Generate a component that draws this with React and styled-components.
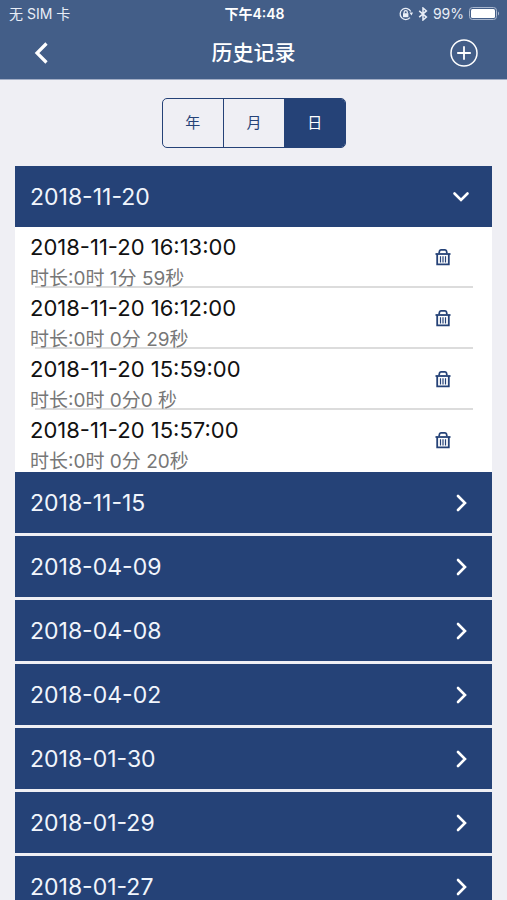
import React, { useState } from "react";
import styled, { createGlobalStyle } from "styled-components";

const GlobalStyle = createGlobalStyle`
    * {
        box-sizing: border-box;
    }
    body {
        margin: 0;
        font-family: Inter, "Noto Sans CJK SC", sans-serif;
    }
    button {
        margin: 0;
        padding: 0;
        border: none;
        background: none;
        color: inherit;
        font: inherit;
        cursor: pointer;
    }
`

const Page = styled.div`
    display: flex;
    flex-direction: column;
    height: 100vh;
    background: #efeff4;
`

const TopArea = styled.header`
    flex: none;
    background: #435e88;
    color: #fff;
    border-bottom: 1px solid #a3aec6;
`

const StatusBar = styled.div`
    display: grid;
    grid-template-columns: 1fr auto 1fr;
    align-items: center;
    height: 28px;
    padding: 0 7px 0 9px;
    font-size: 14px;
    line-height: 20px;
    color: #e9eef7;
`

const StatusTime = styled.span`
    font-weight: 600;
    color: #fff;
`

const StatusIcons = styled.div`
    display: flex;
    justify-content: flex-end;
    align-items: center;
    gap: 5px;
`

const NavBar = styled.nav`
    display: grid;
    grid-template-columns: 1fr auto 1fr;
    align-items: center;
    height: 51px;
    padding: 0 28px 2px;
`

const Title = styled.h1`
    margin: 0;
    font-size: 21px;
    line-height: 32px;
    font-weight: 500;
`

const NavButton = styled.button`
    display: flex;
    justify-self: ${props => props.$side};
`

const Content = styled.main`
    flex: 1;
    min-height: 0;
    overflow-y: auto;
    scrollbar-width: none;
    padding: 18px 15px 0;
`

const Segment = styled.div`
    display: grid;
    grid-template-columns: repeat(3, 1fr);
    width: 184px;
    height: 50px;
    margin: 0 auto 18px;
    border: 1px solid #254277;
    border-radius: 5px;
    overflow: hidden;
`

const SegmentButton = styled.button`
    font-size: 15px;
    line-height: 20px;
    color: ${props => (props.$active ? "#fff" : "#254277")};
    background: ${props => (props.$active ? "#254277" : "transparent")};
    & + & {
        border-left: 1px solid #254277;
    }
`

const GroupHeader = styled.button`
    display: flex;
    justify-content: space-between;
    align-items: center;
    width: 100%;
    height: 61px;
    margin-bottom: ${props => (props.$open ? "0" : "3px")};
    padding: 0 20px 0 15px;
    background: #254277;
    color: #f1f5fc;
    font-size: 23px;
    line-height: 24px;
`

const GroupSection = styled.section`
    display: flex;
    flex-direction: column;
`

const RecordList = styled.ul`
    margin: 0;
    padding: 0 19px 1px 15px;
    list-style: none;
    background: #fff;
`

const Record = styled.li`
    display: flex;
    justify-content: space-between;
    align-items: flex-start;
    height: 61px;
    padding: 4px 22px 0 0;
    background: linear-gradient(#dcdcdc, #dcdcdc) 5px 100% / 100% 2px no-repeat;
    &:last-child {
        background: none;
    }
`

const RecordTime = styled.div`
    font-size: 22px;
    line-height: 32px;
    color: #111;
`

const RecordLength = styled.div`
    font-size: 19px;
    line-height: 32px;
    color: #777;
`

const DeleteButton = styled.button`
    display: flex;
    padding-top: 17px;
`

const days = [
    {
        date: "2018-11-20",
        records: [
            { time: "2018-11-20 16:13:00", length: "时长:0时 1分 59秒" },
            { time: "2018-11-20 16:12:00", length: "时长:0时 0分 29秒" },
            { time: "2018-11-20 15:59:00", length: "时长:0时 0分0 秒" },
            { time: "2018-11-20 15:57:00", length: "时长:0时 0分 20秒" },
        ],
    },
    { date: "2018-11-15", records: [] },
    { date: "2018-04-09", records: [] },
    { date: "2018-04-08", records: [] },
    { date: "2018-04-02", records: [] },
    { date: "2018-01-30", records: [] },
    { date: "2018-01-29", records: [] },
    { date: "2018-01-27", records: [] },
];

const LockIcon = () => (
    <svg width="14" height="14" viewBox="0 0 14 14" fill="none" stroke="#e9eef7" strokeWidth="1.3">
        <path d="M11.8 4.5A5.6 5.6 0 1 0 11 10.6"/>
        <path d="M10.4 5.6h3.6l-1.5 3z" fill="#e9eef7" stroke="none"/>
        <rect x="4" y="6.2" width="5.4" height="4" fill="#e9eef7" stroke="none"/>
        <path d="M5.1 6.4V5.2a1.6 1.6 0 0 1 3.2 0v1.2"/>
    </svg>
);

const BluetoothIcon = () => (
    <svg width="10" height="14" viewBox="0 0 10 14" fill="none" stroke="#e9eef7" strokeWidth="1.5">
        <path d="M1.2 3.9l7.2 6.2L5 13V1l3.4 2.9-7.2 6.2"/>
    </svg>
);

const BatteryIcon = () => (
    <svg width="31" height="14" viewBox="0 0 31 14">
        <rect x="0.5" y="0.5" width="27" height="12" rx="3" fill="none" stroke="#a9b7ce"/>
        <rect x="2" y="2" width="24" height="9" rx="1.5" fill="#fff"/>
        <path d="M29 4.5c1.4.5 1.4 3.5 0 4z" fill="#a9b7ce"/>
    </svg>
);

const BackIcon = () => (
    <svg width="24" height="24" viewBox="0 0 24 24" fill="none" stroke="#fff" strokeWidth="3.2">
        <path d="M18.5 2.5L9 12l9.5 9.5"/>
    </svg>
);

const PlusIcon = () => (
    <svg width="30" height="30" viewBox="0 0 30 30" fill="none" stroke="#fff" strokeWidth="1.5">
        <circle cx="15" cy="15" r="13"/>
        <path d="M15 8.200v13.600M8.200 15h13.600" strokeWidth="1.8"/>
    </svg>
);

const ChevronIcon = ({ open }) => (
    <svg width="22" height="22" viewBox="0 0 22 22" fill="none" stroke="#fff" strokeWidth="2.6" strokeLinecap="round">
        <path d={open ? "M4.5 7.5L11 14l6.5-6.5" : "M8 4l7 7-7 7"}/>
    </svg>
);

const TrashIcon = () => (
    <svg width="16" height="18" viewBox="0 0 16 18" fill="none" stroke="#254277">
        <path d="M4 5.500l.6-2.700Q4.900 1.800 6 1.800h4q1.100 0 1.400 1l.6 2.700" strokeWidth="1.700"/>
        <path d="M0.500 6h15" strokeWidth="1.800"/>
        <path d="M2.200 6v10.300h11.600V6" strokeWidth="1.800"/>
        <path d="M5.500 8.200v6.200M8 8.200v6.200M10.500 8.200v6.200" strokeWidth="1.200"/>
    </svg>
);

const App = () => {
    const [unit, setUnit] = useState("日");
    const [openDate, setOpenDate] = useState("2018-11-20");

    return (
        <Page>
            <GlobalStyle/>
            <TopArea>
                <StatusBar>
                    <span>无 SIM 卡</span>
                    <StatusTime>下午4:48</StatusTime>
                    <StatusIcons>
                        <LockIcon/>
                        <BluetoothIcon/>
                        <span>99%</span>
                        <BatteryIcon/>
                    </StatusIcons>
                </StatusBar>
                <NavBar>
                    <NavButton $side="start" aria-label="返回"><BackIcon/></NavButton>
                    <Title>历史记录</Title>
                    <NavButton $side="end" aria-label="添加"><PlusIcon/></NavButton>
                </NavBar>
            </TopArea>
            <Content>
                <Segment>
                    {["年", "月", "日"].map(name => (
                        <SegmentButton key={name} $active={name === unit} onClick={() => setUnit(name)}>
                            {name}
                        </SegmentButton>
                    ))}
                </Segment>
                {days.map(day => {
                    const open = day.date === openDate && day.records.length > 0;
                    return (
                        <GroupSection key={day.date}>
                            <GroupHeader
                                $open={open}
                                aria-expanded={open}
                                onClick={() => setOpenDate(open ? null : day.date)}
                            >
                                <span>{day.date}</span>
                                <ChevronIcon open={open}/>
                            </GroupHeader>
                            {open && (
                                <RecordList>
                                    {day.records.map(record => (
                                        <Record key={record.time}>
                                            <div>
                                                <RecordTime>{record.time}</RecordTime>
                                                <RecordLength>{record.length}</RecordLength>
                                            </div>
                                            <DeleteButton aria-label="删除"><TrashIcon/></DeleteButton>
                                        </Record>
                                    ))}
                                </RecordList>
                            )}
                        </GroupSection>
                    );
                })}
            </Content>
        </Page>
    );
};

export default App;
